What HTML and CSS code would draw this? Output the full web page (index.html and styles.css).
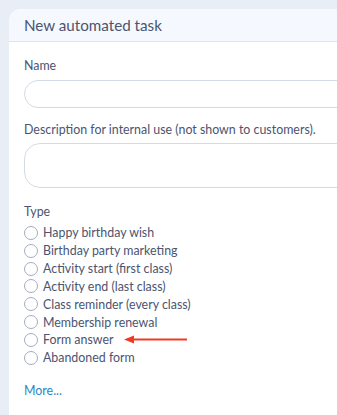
FILE: index.html
```html
<!DOCTYPE html>
<html>

	<head>
		<meta charset="UTF-8">
		<title>New automated task</title>
		<link rel="stylesheet" href="styles.css">
	</head>

	<body>
		<div class="card">
			<div class="card-head">New automated task</div>
			<div class="card-body">
				<label class="label">Name</label>
				<input class="field" type="text">

				<label class="label">Description for internal use (not shown to customers).</label>
				<textarea class="field area"></textarea>

				<div class="label">Type</div>
				<ul class="types">
					<li><span class="radio"></span>Happy birthday wish</li>
					<li><span class="radio"></span>Birthday party marketing</li>
					<li><span class="radio"></span>Activity start (first class)</li>
					<li><span class="radio"></span>Activity end (last class)</li>
					<li><span class="radio"></span>Class reminder (every class)</li>
					<li><span class="radio"></span>Membership renewal</li>
					<li class="marked"><span class="radio"></span>Form answer
						<svg class="arrow" width="64" height="9" viewBox="0 0 64 9">
							<line x1="6" y1="4.5" x2="63" y2="4.5" stroke="#f03a24" stroke-width="2"/>
							<polygon points="0,4.5 10,0.5 10,8.5" fill="#f03a24"/>
						</svg>
					</li>
					<li><span class="radio"></span>Abandoned form</li>
				</ul>

				<a class="more" href="#">More...</a>
			</div>
		</div>
	</body>

</html>
```

FILE: styles.css
```css
body {
	margin: 0;
	padding: 9px 0 0 9px;
	background: #e9edf5;
	font-family: "Lato", "Open Sans", sans-serif;
	color: #4b5470;
	overflow: hidden;
}

.card {
	width: 360px;
	height: 420px;
	background: #fff;
	border-top-left-radius: 12px;
	overflow: hidden;
}

.card-head {
	height: 32px;
	line-height: 32px;
	padding-left: 15px;
	background: #f5f8fe;
	border-bottom: 1px solid #dfe4ef;
	font-size: 15.2px;
}

.card-body {
	padding: 16px 0 0 15px;
}

.label {
	display: block;
	font-size: 12.4px;
	line-height: 16px;
}

.field {
	display: block;
	box-sizing: border-box;
	width: 340px;
	height: 28px;
	margin: 6px 0 14px;
	border: 1px solid #d3d9e6;
	border-radius: 14px;
	background: #fff;
	outline: none;
	font: inherit;
}

.area {
	height: 45px;
	margin-top: 5px;
	border-radius: 16px;
	resize: none;
	margin-bottom: 16px;
}

.types {
	list-style: none;
	margin: 4px 0 0;
	padding: 0;
}

.types li {
	display: flex;
	align-items: center;
	height: 17.85px;
	font-size: 12.4px;
}

.radio {
	width: 12px;
	height: 12px;
	border: 1px solid #a4acbf;
	border-radius: 50%;
	margin-right: 5px;
	flex: none;
}

.arrow {
	margin-left: 10px;
}

.more {
	display: inline-block;
	margin-top: 16px;
	font-size: 12.4px;
	line-height: 16px;
	color: #2b86c5;
	text-decoration: none;
}
```
